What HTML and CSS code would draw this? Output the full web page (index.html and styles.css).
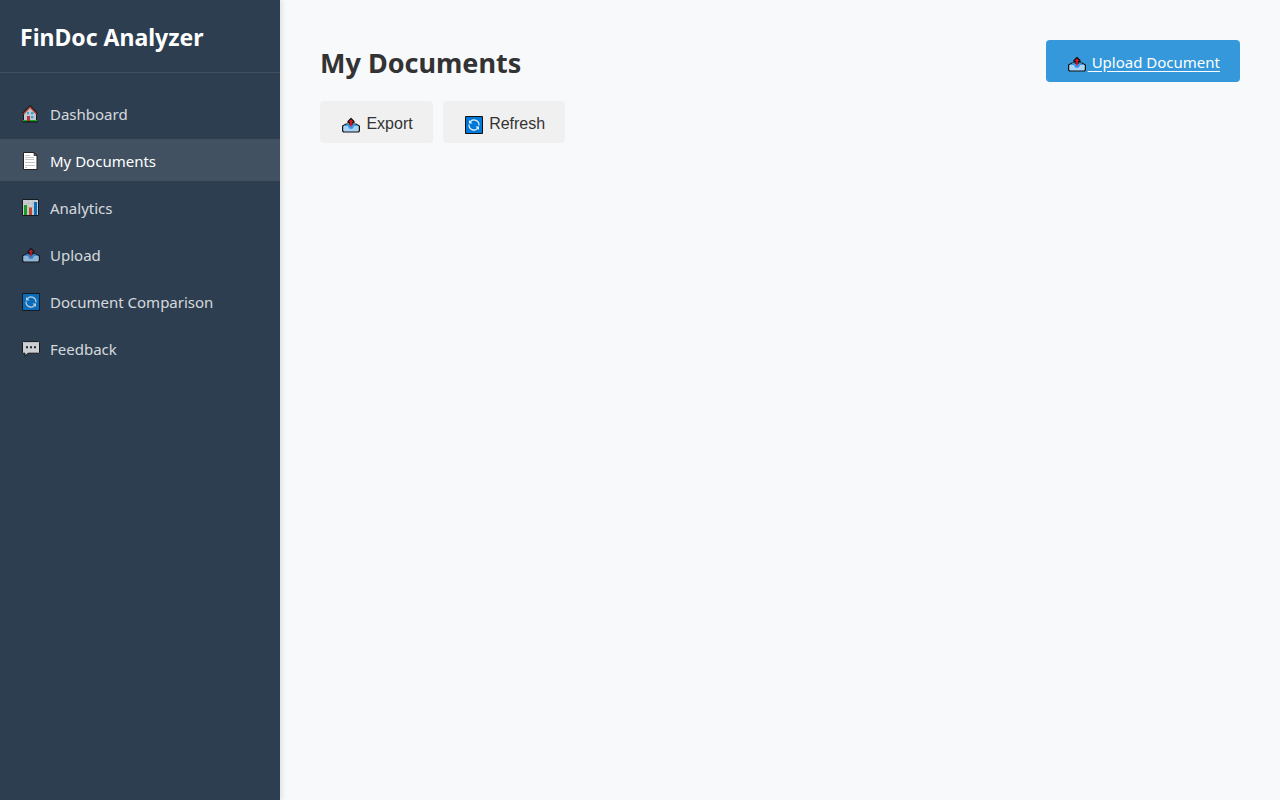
FILE: index.html
```html
<!DOCTYPE html>
<html lang="en">
<head>
<meta charset="utf-8">
<meta name="viewport" content="width=device-width, initial-scale=1">
<title>My Documents - FinDoc Analyzer</title>
<link rel="stylesheet" href="styles.css">
</head>
<body>
<svg class="sprite" aria-hidden="true">
  <symbol id="icon-home" viewBox="0 0 18 18">
    <path d="M1.500 16.500V8L8 1.500 14.500 8v8.500z" fill="#e9e9ee" stroke="#111"/>
    <path d="M.500 8.500L8 .800l7.500 7.700" fill="none" stroke="#111" stroke-width="1.200"/>
    <path d="M1.500 9L8 2.300 14.500 9" fill="none" stroke="#d8432f" stroke-width="1.300"/>
    <path d="M5 7h2v2.300H5zM9 7h2.500v2.300H9zM9 11h2.500v2.300H9z" fill="#35c1f1"/>
    <path d="M5 11h3v5H5z" fill="#d13438"/>
    <path d="M1 15h4v1.500H1zM8 15h7v1.500H8z" fill="#16c60c"/>
    <path d="M.500 17h15.500" stroke="#111"/>
  </symbol>
  <symbol id="icon-page" viewBox="0 0 18 18">
    <path d="M1.500.500h10.500l3 3v14h-13.500z" fill="#fff" stroke="#222"/>
    <path d="M12 .500v3h3z" fill="#555" stroke="#222" stroke-width=".7"/>
    <path d="M3 3.500h5M3 5.500h9M3 7.500h9M3 10.500h10M3 13.500h10M3 15.500h2" stroke="#c4c4c4"/>
  </symbol>
  <symbol id="icon-chart" viewBox="0 0 18 18">
    <path d="M.500.500h16v16H.500z" fill="#f2f2f2" stroke="#111"/>
    <path d="M1 4.500h15M1 8.500h15M1 12.500h15M6 1v15M11 1v15" stroke="#d8d8dc" stroke-width=".6"/>
    <path d="M2 6h3v10H2z" fill="#16b31b"/>
    <path d="M7 8.500h3V16H7z" fill="#e74826"/>
    <path d="M12 3h3v13h-3z" fill="#0078d7"/>
  </symbol>
  <symbol id="icon-tray" viewBox="0 0 18 18">
    <path d="M.600 10L4 8h10l3.400 2v5l-.900 1H1.500l-.900-1z" fill="#a8d5f7" stroke="#111" stroke-width="1.200"/>
    <path d="M1.500 10L4.500 8.600h9l3 1.400h-4.500Q11.500 13 9 13T6 10z" fill="#3b97ea"/>
    <path d="M9 2.500L6 5.500v1h2v2h2v-2h2v-1z" fill="#e81224" stroke="#111" stroke-width="1.200" stroke-linejoin="round"/>
    <path d="M8.200 6h1.600v4.500H8.200z" fill="#e81224"/>
  </symbol>
  <symbol id="icon-refresh" viewBox="0 0 18 18">
    <path d="M.500.500h17v17H.500z" fill="#0078d7" stroke="#111"/>
    <path d="M5.200 5.800A4.900 4.900 0 0 1 13.900 9.500M12.800 12.200A4.900 4.900 0 0 1 4.100 8.500" fill="none" stroke="#e4f1fb" stroke-width="1.200"/>
    <path d="M4 4v3.500h3.500zM14 14v-3.500h-3.500z" fill="#e4f1fb"/>
  </symbol>
  <symbol id="icon-speech" viewBox="0 0 18 18">
    <path d="M1.200 1.600h15.600l.700.700v10.200l-.700.700H6L3 16.300v-3.100H1.200l-.700-.700V2.300z" fill="#f4f4f4" stroke="#111" stroke-linejoin="round"/>
    <path d="M4 6.200h2v2H4zM8 6.200h2v2H8zM12 6.200h2v2h-2z" fill="#222"/>
  </symbol>
</svg>
<div class="layout">
  <aside class="sidebar">
    <div class="brand"><h2 class="brand-name">FinDoc Analyzer</h2></div>
    <nav aria-label="Main">
      <ul class="menu">
        <li><a class="menu-link" href="#dashboard"><svg class="icon" aria-hidden="true"><use href="#icon-home"/></svg>Dashboard</a></li>
        <li><a class="menu-link active" href="#documents" aria-current="page"><svg class="icon" aria-hidden="true"><use href="#icon-page"/></svg>My Documents</a></li>
        <li><a class="menu-link" href="#analytics"><svg class="icon" aria-hidden="true"><use href="#icon-chart"/></svg>Analytics</a></li>
        <li><a class="menu-link" href="#upload"><svg class="icon" aria-hidden="true"><use href="#icon-tray"/></svg>Upload</a></li>
        <li><a class="menu-link" href="#comparison"><svg class="icon" aria-hidden="true"><use href="#icon-refresh"/></svg>Document Comparison</a></li>
        <li><a class="menu-link" href="#feedback"><svg class="icon" aria-hidden="true"><use href="#icon-speech"/></svg>Feedback</a></li>
      </ul>
    </nav>
  </aside>
  <main class="content">
    <header class="page-header">
      <h1 class="page-title">My Documents</h1>
      <a class="btn btn-primary" href="#upload"><svg class="btn-icon" aria-hidden="true"><use href="#icon-tray"/></svg> Upload Document</a>
    </header>
    <div class="actions">
      <button class="btn btn-plain" type="button"><svg class="btn-icon" aria-hidden="true"><use href="#icon-tray"/></svg> Export</button>
      <button class="btn btn-plain" type="button"><svg class="btn-icon" aria-hidden="true"><use href="#icon-refresh"/></svg> Refresh</button>
    </div>
  </main>
</div>
</body>
</html>
```
FILE: styles.css
```css
* {
  box-sizing: border-box;
  margin: 0;
  padding: 0;
}

body {
  font-family: "Segoe UI", "Noto Sans", "Open Sans", sans-serif;
  font-size: 15px;
  line-height: 26px;
  color: #333;
  background: #f8f9fb;
}

.sprite {
  display: none;
}

.layout {
  display: flex;
  min-height: 100vh;
}

.sidebar {
  flex: none;
  width: 280px;
  color: #fff;
  background: #2c3e50;
  box-shadow: 2px 0 5px rgba(0, 0, 0, 0.1);
}

.brand {
  padding: 21px 20px 19px;
  border-bottom: 1px solid rgba(255, 255, 255, 0.1);
}

.brand-name {
  font-size: 23px;
  line-height: 32px;
}

.menu {
  display: flex;
  flex-direction: column;
  gap: 5px;
  padding: 19px 0;
  list-style: none;
}

.menu-link {
  display: flex;
  align-items: center;
  gap: 10px;
  padding: 9px 20px 7px;
  color: #fff;
  text-decoration: none;
  opacity: 0.8;
}

.menu-link.active {
  background: rgba(255, 255, 255, 0.1);
  opacity: 1;
}

.icon {
  width: 18px;
  height: 18px;
  margin-left: 2px;
}

.content {
  flex: 1;
  padding: 40px;
}

.page-header {
  display: flex;
  justify-content: space-between;
  align-items: flex-start;
  margin-bottom: 15px;
}

.page-title {
  font-size: 27px;
  line-height: 46px;
}

.actions {
  display: flex;
  gap: 10px;
}

.btn {
  padding: 9px 20px 7px;
  border: 0;
  border-radius: 4px;
}

.btn-primary {
  color: #fff;
  background: #3498db;
  text-underline-offset: 3px;
}

.btn-plain {
  padding: 10px 20px 6px;
  font: 16px/26px "Liberation Sans", Arial, sans-serif;
  color: #333;
  background: #f0f0f0;
}

.btn-icon {
  width: 18px;
  height: 18px;
  margin: 0 2px;
  vertical-align: -5px;
}
```
